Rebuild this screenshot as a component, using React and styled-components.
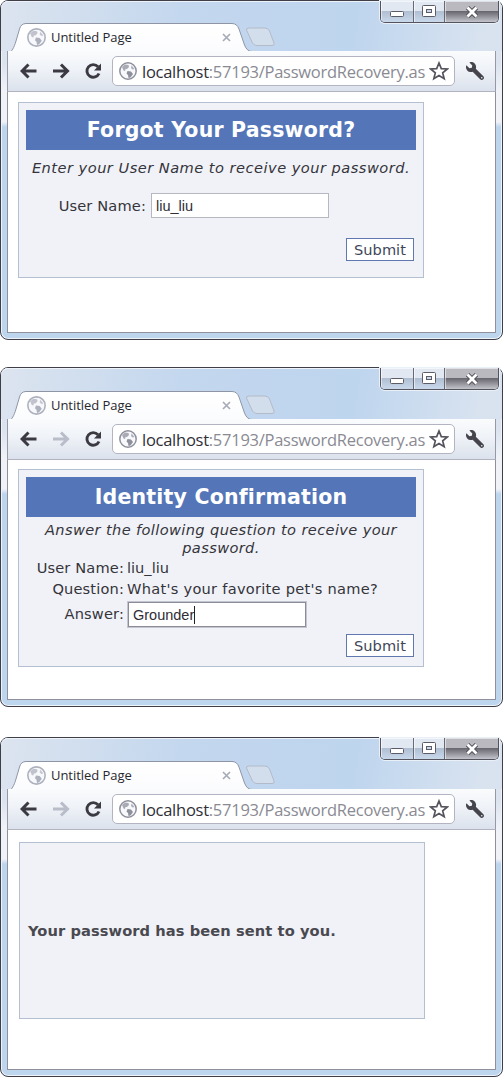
import React from 'react';
import styled, { createGlobalStyle, css } from 'styled-components';
import { FaWrench } from 'react-icons/fa';

const GlobalStyle = createGlobalStyle`
  * { box-sizing: border-box; }
  body { margin: 0; background: #fff; }
`;

const verdana = css`font-family: "DejaVu Sans", sans-serif;`;
const segoe = css`font-family: "Open Sans", "Noto Sans", sans-serif;`;

const Page = styled.main`
  width: 503px;
  height: 1077px;
  overflow: hidden;
  display: flex;
  flex-direction: column;
`;

const Frame = styled.section`
  position: relative;
  flex: none;
  height: ${(p) => p.$height}px;
  margin-bottom: ${(p) => p.$gap}px;
  display: flex;
  flex-direction: column;
  padding: 0 6px 6px;
  border: 1px solid #403f48;
  border-radius: 8px;
  box-shadow: inset 0 0 0 1px #eef3fa;
  background: linear-gradient(180deg, #d9e2ef 0, #dbe3ef 62px, #f0f2f8 90px, #f0f2f8 121px, #bed5ee 126px);
`;

const TitleBar = styled.header`
  position: relative;
  flex: none;
  height: ${(p) => p.$height}px;
  margin: 0 -6px;
  border-radius: 7px 7px 0 0;
  display: flex;
  align-items: flex-end;
  background: linear-gradient(100deg, #dce4ef 0, #c3d7ee 36%, #bed5ee 70%, #d9e3f0 96%);
  box-shadow: inset 0 1px 0 #eef3fa;
`;

const TabShape = styled.svg`
  position: absolute;
  left: -1px;
  bottom: -6px;
  display: block;
`;

const TabLabel = styled.div`
  position: relative;
  display: flex;
  align-items: center;
  width: 204px;
  height: 28px;
  margin-left: 26px;
`;

const TabTitle = styled.span`
  ${segoe}
  flex: 1;
  margin-left: 5px;
  font-size: 13px;
  letter-spacing: -0.05px;
  white-space: nowrap;
  color: #29282f;
`;

const Controls = styled.div`
  position: absolute;
  top: 0;
  right: 3px;
  display: flex;
  width: 119px;
  height: 22px;
  overflow: hidden;
  border: 1px solid #55545e;
  border-top: 0;
  border-radius: 0 0 5px 5px;
  box-shadow: 0 0 0 1px #eaf0f8;
`;

const Control = styled.span`
  flex: ${(p) => p.$width};
  display: flex;
  align-items: center;
  justify-content: center;
  padding-top: ${(p) => p.$drop || 0}px;
  border-left: ${(p) => (p.$divided ? '1px solid #686974' : '0')};
  box-shadow: inset 1px 1px 0 rgba(255, 255, 255, .55);
  background: ${(p) => (p.$dark
    ? 'linear-gradient(#bbb9c0 0 46%, #69676f 50%, #96959d 75%, #c3c5cc)'
    : 'linear-gradient(#e2e8f2 0 46%, #b1bfd3 50%, #c9d8eb)')};
`;

const Toolbar = styled.nav`
  position: relative;
  flex: none;
  height: 41px;
  display: flex;
  align-items: center;
  padding: 0 9px 0 12px;
  border: 1px solid #9798a4;
  border-top: 0;
  border-bottom: 1px solid #b1b3be;
  background: linear-gradient(#fafbfd, #eff2f7 45%, #dbe2ed);
`;

const NavIcon = styled.svg`
  flex: none;
  margin-right: ${(p) => p.$gap}px;
  color: ${(p) => (p.$faded ? '#b9bdc9' : '#3b3a42')};
`;

const Omnibox = styled.div`
  display: flex;
  align-items: center;
  width: 343px;
  height: 30px;
  padding: 0 5px 0 6px;
  border: 1px solid #b2b5c1;
  border-radius: 5px;
  background: #fff;
`;

const Url = styled.span`
  ${segoe}
  flex: 1;
  min-width: 0;
  margin-left: 5px;
  font-size: 16.5px;
  letter-spacing: -0.26px;
  white-space: nowrap;
  color: #8a8a93;
  b { font-weight: 400; color: #302f37; }
`;

const Star = styled.svg`
  flex: none;
`;

const Wrench = styled(FaWrench)`
  flex: none;
  margin-left: 11px;
  color: #45444c;
  transform: scaleX(-1);
`;

const Viewport = styled.div`
  flex: 1;
  min-height: 0;
  padding: ${(p) => p.$top}px 0 0 ${(p) => p.$left}px;
  border: 1px solid #8f909b;
  border-top: 0;
  background: #fff;
`;

const Panel = styled.div`
  ${verdana}
  width: 406px;
  height: ${(p) => p.$height}px;
  padding: 7px;
  display: flex;
  flex-direction: column;
  border: 1px solid #b4bfd1;
  background: #f0f2f7;
  color: #35343b;
  font-size: 14.6px;
`;

const Heading = styled.h1`
  flex: none;
  margin: 0;
  height: 40px;
  line-height: 40px;
  text-align: center;
  font-size: 20.5px;
  letter-spacing: 0.2px;
  font-weight: 700;
  color: #fff;
  background: #5475b8;
`;

const Instruction = styled.p`
  flex: none;
  margin: ${(p) => p.$top}px 0 0;
  text-align: center;
  font-style: italic;
  line-height: 18px;
  letter-spacing: ${(p) => p.$tracking}px;
`;

const Fields = styled.div`
  display: grid;
  grid-template-columns: ${(p) => p.$label}px auto;
  column-gap: ${(p) => p.$gap}px;
  justify-content: start;
  align-items: center;
  margin-top: ${(p) => p.$top}px;
  grid-auto-rows: minmax(21px, auto);
`;

const Label = styled.label`
  text-align: right;
  white-space: nowrap;
  letter-spacing: 0.15px;
`;

const Value = styled.span`
  white-space: nowrap;
  padding-left: 1px;
  letter-spacing: ${(p) => p.$tracking || 0}px;
`;

const TextBox = styled.div`
  display: flex;
  align-items: center;
  width: 178px;
  height: 25px;
  padding-left: 4px;
  font-family: "Liberation Sans", sans-serif;
  font-size: 14.5px;
  color: #2f2e36;
  background: #fff;
  border: 1px solid ${(p) => (p.$focused ? '#8b8c97' : '#b5b7c2')};
  ${(p) => p.$focused && css`
    margin: 3px 0 1px 2px;
    box-shadow: 0 0 0 1px #c3c5d0;
  `}
`;

const Caret = styled.i`
  width: 1px;
  height: 18px;
  background: #222;
`;

const SubmitButton = styled.button`
  ${verdana}
  align-self: flex-end;
  margin: auto 2px ${(p) => p.$bottom}px 0;
  width: 68px;
  height: 23px;
  padding: 0;
  border: 1px solid #6178ae;
  background: #fff;
  color: #3f4659;
  font-size: 14.6px;
  line-height: 20px;
`;

const Notice = styled.p`
  margin: auto 0;
  padding-left: 1px;
  font-weight: 700;
  font-size: 14.65px;
  letter-spacing: 0.08px;
  white-space: nowrap;
  color: #4a4950;
`;

function Globe({ size, tone }) {
  return (
    <svg width={size} height={size} viewBox="0 0 18 18">
      <circle cx="9" cy="9" r="8.2" fill="#f7f8fb" stroke={tone} strokeWidth="1.5" />
      <path d="M3 5 L6 2.5 L9.5 3 L10 5 L8 7 L6.5 7 L6 9 L4.5 8.5 Z" fill={tone} opacity=".75" />
      <path d="M8.5 9 L12 9.5 L14 12 L11.5 15.5 L9.5 16 L9 13 L7.5 11.5 Z" fill={tone} />
      <path d="M12.5 3.5 L15.5 7 L13.5 7.5 L12 6 Z" fill={tone} opacity=".7" />
    </svg>
  );
}

function Arrow({ forward, faded, gap }) {
  return (
    <NavIcon width="18" height="18" viewBox="0 0 18 18" $gap={gap} $faded={faded}>
      <path
        d={forward ? 'M1 9 H15 M9 2.500 L15.500 9 L9 15.500' : 'M16.500 9 H3 M8.500 2.500 L2 9 L8.500 15.500'}
        fill="none" stroke="currentColor" strokeWidth="3"
      />
    </NavIcon>
  );
}

function Browser({ height, gap = 0, barHeight = 51, canForward, top, left = 10, children }) {
  return (
    <Frame $height={height} $gap={gap}>
      <TitleBar $height={barHeight - 1}>
        <TabShape width="503" height="34" viewBox="0 0 503 34">
          <defs>
            <linearGradient id="tabFill" x1="0" y1="0" x2="0" y2="1">
              <stop offset="0" stopColor="#fff" />
              <stop offset="1" stopColor="#fafbfd" />
            </linearGradient>
          </defs>
          <path d="M246.5 7 Q246 5 249 5 H265 Q268 5 269.500 8 L274 20 Q275 22.500 272 22.500 H257 Q254 22.500 252.500 20 Z" fill="#d3deec" stroke="#b3bac8" />
          <path
            d="M7.500 34 V32 C12 28 14 25 16 18 L19.500 6 Q21 .5 26 .5 H232 Q237 .5 239 6 L244.500 22 Q247 28.500 252 28.500 H490 Q495.500 28.500 495.500 34"
            fill="url(#tabFill)" stroke="#8f95a5"
          />
        </TabShape>
        <TabLabel>
          <Globe size={19} tone="#adb1bd" />
          <TabTitle>Untitled Page</TabTitle>
          <svg width="9" height="9" viewBox="0 0 9 9">
            <path d="M1 1 L8 8 M8 1 L1 8" stroke="#a6a9b6" strokeWidth="1.6" />
          </svg>
        </TabLabel>
        <Controls>
          <Control $width={33} $drop={5}>
            <svg width="14" height="7" viewBox="0 0 14 7">
              <rect x=".5" y=".5" width="13" height="5" rx="1" fill="#fff" stroke="#5b5c68" />
            </svg>
          </Control>
          <Control $width={31} $divided>
            <svg width="14" height="13" viewBox="0 0 14 13">
              <rect x=".5" y=".5" width="13" height="11" rx="1" fill="#fff" stroke="#5b5c68" />
              <rect x="4.500" y="4.500" width="5" height="3" fill="#cbd6e6" stroke="#5b5c68" />
            </svg>
          </Control>
          <Control $width={54} $dark $divided>
            <svg width="14" height="12" viewBox="0 0 14 12">
              <path d="M2.500 1.500 L11.500 10.500 M11.500 1.500 L2.500 10.500" stroke="#504f58" strokeWidth="4.600" />
              <path d="M2.500 1.500 L11.500 10.500 M11.500 1.500 L2.500 10.500" stroke="#fff" strokeWidth="2.800" />
            </svg>
          </Control>
        </Controls>
      </TitleBar>
      <Toolbar>
        <Arrow gap={14} />
        <Arrow forward faded={!canForward} gap={14} />
        <NavIcon width="18" height="18" viewBox="0 0 18 18" $gap={10}>
          <path d="M14 4.800 A6.300 6.300 0 1 0 15 11.500" fill="none" stroke="currentColor" strokeWidth="2.900" />
          <path d="M17 1.500 V8.500 H10 Z" fill="currentColor" />
        </NavIcon>
        <Omnibox>
          <Globe size={18} tone="#8e909c" />
          <Url><b>localhost</b>:57193/PasswordRecovery.as</Url>
          <Star width="20" height="20" viewBox="0 0 20 20">
            <path d="M10 2 L12.300 7.600 L18.300 8 L13.700 11.900 L15.200 17.800 L10 14.600 L4.800 17.800 L6.300 11.900 L1.700 8 L7.700 7.600 Z" fill="#fff" stroke="#55545d" strokeWidth="1.700" />
          </Star>
        </Omnibox>
        <Wrench size={18} />
      </Toolbar>
      <Viewport $top={top} $left={left}>{children}</Viewport>
    </Frame>
  );
}

export default function App() {
  return (
    <Page>
      <GlobalStyle />
      <Browser height={340} gap={27} canForward top={10}>
        <Panel $height={176}>
          <Heading>Forgot Your Password?</Heading>
          <Instruction $top={9} $tracking={0.48}>Enter your User Name to receive your password.</Instruction>
          <Fields $label={120} $gap={5} $top={16}>
            <Label>User Name:</Label>
            <TextBox>liu_liu</TextBox>
          </Fields>
          <SubmitButton $bottom={9}>Submit</SubmitButton>
        </Panel>
      </Browser>
      <Browser height={340} gap={30} barHeight={52} top={9}>
        <Panel $height={198}>
          <Heading>Identity Confirmation</Heading>
          <Instruction $top={4} $tracking={0.37}>Answer the following question to receive your password.</Instruction>
          <Fields $label={98} $gap={2} $top={0}>
            <Label>User Name:</Label>
            <Value>liu_liu</Value>
            <Label>Question:</Label>
            <Value $tracking={0.27}>What&apos;s your favorite pet&apos;s name?</Value>
            <Label>Answer:</Label>
            <TextBox $focused>Grounder<Caret /></TextBox>
          </Fields>
          <SubmitButton $bottom={2}>Submit</SubmitButton>
        </Panel>
      </Browser>
      <Browser height={340} barHeight={52} top={12} left={11}>
        <Panel $height={177}>
          <Notice>Your password has been sent to you.</Notice>
        </Panel>
      </Browser>
    </Page>
  );
}
